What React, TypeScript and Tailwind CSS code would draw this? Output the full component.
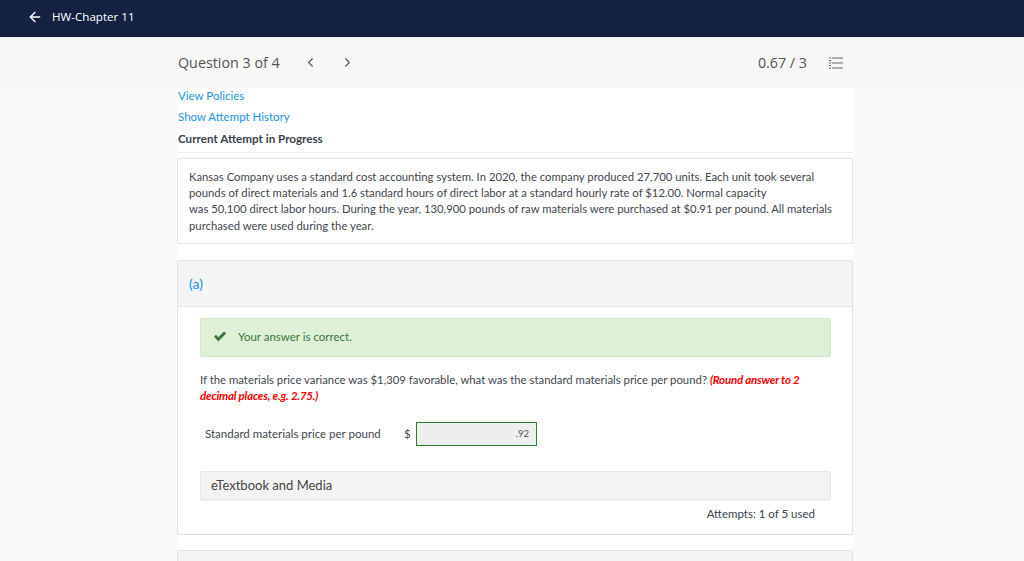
import { ArrowLeft, ChevronLeft, ChevronRight } from "lucide-react";

function ListIcon() {
  return (
    <svg width="14" height="12" viewBox="0 0 14 12" className="text-[#666]" aria-hidden>
      <g fill="currentColor">
        <rect x="0" y="0.5" width="2" height="1" />
        <rect x="0" y="3" width="2" height="1" />
        <rect x="0" y="5.5" width="2" height="1" />
        <rect x="0" y="8" width="2" height="1" />
        <rect x="0" y="10.5" width="2" height="1" />
        <rect x="3" y="0.5" width="11" height="1" />
        <rect x="3" y="5.5" width="11" height="1" />
        <rect x="3" y="10.5" width="11" height="1" />
      </g>
    </svg>
  );
}

function CheckIcon() {
  return (
    <svg width="14" height="11" viewBox="0 0 14 11" aria-hidden>
      <path d="M1 5.6 L3 3.7 L5.3 6.2 L11 0.6 L13.2 2.6 L5.3 10.4 Z" fill="#3c763d" />
    </svg>
  );
}

export default function App() {
  return (
    <div className="h-[561px] overflow-hidden bg-[#fafafa] font-['Lato',sans-serif] text-[#3f464e]">
      <header className="flex h-[37px] items-center bg-[#14213f] pb-[4px] pl-[27px] text-white">
        <ArrowLeft size={16} strokeWidth={2} />
        <span className="ml-[9px] font-['Open_Sans',sans-serif] text-[11.6px]">HW-Chapter 11</span>
      </header>

      <div className="h-[51px] bg-[#f7f7f7]">
        <div className="ml-[177px] flex h-full w-[676px] items-center font-['Open_Sans',sans-serif] text-[#555]">
          <span className="ml-[1px] text-[14.3px]">Question 3 of 4</span>
          <ChevronLeft size={15} strokeWidth={1.75} className="ml-[23px] text-[#555]" />
          <ChevronRight size={15} strokeWidth={1.75} className="ml-[22px] text-[#555]" />
          <span className="ml-auto text-[14.3px]">0.67 / 3</span>
          <span className="mr-[10px] ml-[22px] flex">
            <ListIcon />
          </span>
        </div>
      </div>

      <main className="ml-[177px] w-[676px] bg-white">
        <div className="flex h-[65px] flex-col border-b border-[#eeeeee] pt-[1px] text-[11.5px]">
          <a className="ml-[1px] h-[21px] leading-[14px] text-[#1a94e0]">View Policies</a>
          <a className="ml-[1px] h-[21.5px] leading-[14px] text-[#1a94e0]">Show Attempt History</a>
          <span className="ml-[1px] text-[11.65px] font-bold leading-[14px] text-[#3a424b]">Current Attempt in Progress</span>
        </div>

        <div className="mt-[5px] rounded-[2px] border border-[#e3e3e3] px-[11px] pt-[10px] pb-[9px] text-[11.3px] leading-[16.2px]">
          Kansas Company uses a standard cost accounting system. In 2020, the company produced 27,700 units. Each unit took several
          <br />
          pounds of direct materials and 1.6 standard hours of direct labor at a standard hourly rate of $12.00. Normal capacity
          <br />
          was 50,100 direct labor hours. During the year, 130,900 pounds of raw materials were purchased at $0.91 per pound. All materials
          <br />
          purchased were used during the year.
        </div>

        <section className="mt-[16px] h-[275px] rounded-[2px] border border-[#e3e3e3]">
          <div className="flex h-[46px] items-center border-b border-[#e3e3e3] bg-[#f5f5f5] pl-[11px] text-[14px] text-[#1a94e0]">
            (a)
          </div>
          <div className="pt-[11px] pr-[21px] pl-[22px]">
            <div className="flex h-[39px] items-center rounded-[2px] border border-[#d6e9c6] bg-[#dff0d8] pb-[1px] pl-[12px] text-[11.5px] text-[#3c763d]">
              <CheckIcon />
              <span className="ml-[11px]">Your answer is correct.</span>
            </div>
            <p className="mt-[15px] text-[11.35px] leading-[16px]">
              If the materials price variance was $1,309 favorable, what was the standard materials price per pound?{" "}
              <b className="text-[11.5px] italic tracking-[-0.2px] text-[#ff0000]">
                (Round answer to 2
                <br />
                decimal places, e.g. 2.75.)
              </b>
            </p>
            <div className="mt-[18px] flex h-[24px] items-center pl-[5px] text-[11.5px]">
              <span className="w-[199px]">Standard materials price per pound</span>
              <span className="w-[12px]">$</span>
              <div className="flex h-[24px] w-[121px] items-center justify-end border border-[#2e7d32] bg-[#eeeeee] pr-[7px] text-[9.5px] text-[#555]">
                .92
              </div>
            </div>
            <div className="mt-[25px] flex h-[29px] items-center rounded-[2px] border border-[#e8e8e8] bg-[#f4f4f4] pl-[10px] text-[13px] text-[#444] shadow-[0_1px_1px_rgba(0,0,0,0.06)]">
              eTextbook and Media
            </div>
            <div className="mt-[7px] pr-[16px] text-right text-[11.5px] leading-[14px] text-[#3a424b]">
              Attempts: 1 of 5 used
            </div>
          </div>
        </section>

        <div className="mt-[15px] h-[40px] rounded-t-[2px] border border-[#e3e3e3] bg-[#f5f5f5]" />
      </main>
    </div>
  );
}
